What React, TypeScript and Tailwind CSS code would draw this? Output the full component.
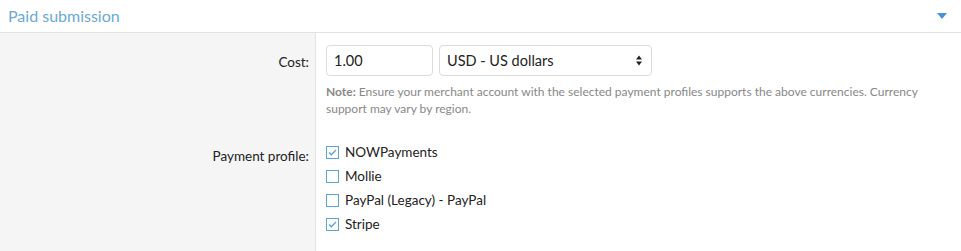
import React from 'react';

const profiles = [
  { name: 'NOWPayments', checked: true },
  { name: 'Mollie', checked: false },
  { name: 'PayPal (Legacy) - PayPal', checked: false },
  { name: 'Stripe', checked: true },
];

function Box({ checked }: { checked: boolean }) {
  return (
    <svg width="13" height="13" viewBox="0 0 13 13" className="shrink-0">
      <rect x="0.5" y="0.5" width="12" height="12" fill="#fff" stroke="#5aa5d8" />
      {checked && <path d="M3 6.5 L5.3 8.8 L10 4" fill="none" stroke="#5aa5d8" strokeWidth="1.3" />}
    </svg>
  );
}

export default function App() {
  return (
    <div className="w-[961px] h-[251px] bg-white text-[13.5px] text-[#222]" style={{ fontFamily: '"Segoe UI", Lato, "Noto Sans", sans-serif' }}>
      <div className="h-[33px] flex items-center justify-between pl-2 pr-[14px] border-b border-[#e2e2e2]">
        <span className="text-[16px] text-[#6aa9d6]">Paid submission</span>
        <svg width="10" height="6" viewBox="0 0 10 6"><path d="M0 0 H10 L5 6 Z" fill="#4b92d4" /></svg>
      </div>
      <div className="flex h-[218px]">
        <div className="w-[316px] bg-[#f5f5f5] border-r border-[#e2e2e2] shrink-0">
          <div className="text-right pr-[6px] pt-[19px] h-[113px]">Cost:</div>
          <div className="text-right pr-[6px]">Payment profile:</div>
        </div>
        <div className="flex-1 pl-[10px] pt-[12px]">
          <div className="flex gap-[6px] text-[14.5px]">
            <div className="w-[107px] h-[31px] border border-[#dcdcdc] rounded-[4px] px-[7px] flex items-center bg-white">1.00</div>
            <div className="w-[213px] h-[31px] border border-[#dcdcdc] rounded-[4px] pl-[7px] pr-[9px] flex items-center justify-between bg-white">
              <span>USD - US dollars</span>
              <svg width="6" height="11" viewBox="0 0 6 11"><path d="M0 4.5 L3 0.5 L6 4.5 Z M0 6.5 L3 10.5 L6 6.5 Z" fill="#222" /></svg>
            </div>
          </div>
          <p
            className="mt-[7px] text-[12px] leading-[17px] text-[#888] w-[600px]"
            style={{ fontFamily: '"Liberation Sans Narrow", "Segoe UI", Lato, sans-serif' }}
          >
            <b className="font-bold">Note:</b> Ensure your merchant account with the selected payment profiles supports the above currencies. Currency support may vary by region.
          </p>
          <div className="mt-[23px] flex flex-col">
            {profiles.map((p) => (
              <div key={p.name} className="flex items-center gap-[6px] h-[24px]">
                <Box checked={p.checked} />
                <span>{p.name}</span>
              </div>
            ))}
          </div>
        </div>
      </div>
    </div>
  );
}
